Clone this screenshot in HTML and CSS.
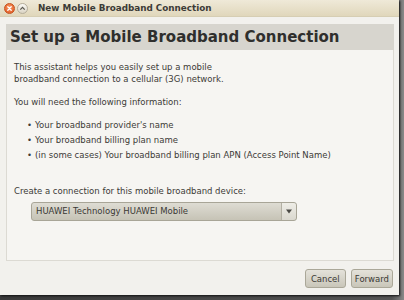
FILE: index.html
```html
<!DOCTYPE html>
<html lang="en">
<head>
    <meta charset="UTF-8">
    <title>New Mobile Broadband Connection</title>
    <link rel="stylesheet" href="styles.css">
</head>
<body>
    <div class="window">
        <div class="titlebar">
            <span class="wbtn close">
                <svg width="7" height="7" viewBox="0 0 7 7"><path d="M1.8 1.8L5.2 5.2M5.2 1.8L1.8 5.2" stroke="#fff" stroke-width="1.3" stroke-linecap="round"/></svg>
            </span>
            <span class="wbtn minimize">
                <svg width="7" height="7" viewBox="0 0 7 7"><path d="M1.3 4.6L3.5 2.4L5.7 4.6" fill="none" stroke="#5a5850" stroke-width="1.2"/></svg>
            </span>
            <span class="title">New Mobile Broadband Connection</span>
        </div>
        <div class="dialog">
            <div class="header">Set up a Mobile Broadband Connection</div>
            <div class="content">
                <p>This assistant helps you easily set up a mobile<br>broadband connection to a cellular (3G) network.</p>
                <p>You will need the following information:</p>
                <ul class="needs">
                    <li>Your broadband provider's name</li>
                    <li>Your broadband billing plan name</li>
                    <li>(in some cases) Your broadband billing plan APN (Access Point Name)</li>
                </ul>
                <p class="device-label">Create a connection for this mobile broadband device:</p>
                <div class="combo">
                    <span class="combo-text">HUAWEI Technology HUAWEI Mobile</span>
                    <span class="combo-arrow">
                        <svg width="6" height="5" viewBox="0 0 6 5"><path d="M0 0.5H6L3 4.5Z" fill="#4a4945"/></svg>
                    </span>
                </div>
            </div>
            <div class="actions">
                <button class="button">Cancel</button>
                <button class="button">Forward</button>
            </div>
        </div>
    </div>
</body>
</html>
```

FILE: styles.css
```css
body {
    margin: 0;
    width: 404px;
    height: 300px;
    overflow: hidden;
    background: linear-gradient(90deg, #3a3a3a, #555 97%, #888);
    font-family: "DejaVu Sans", sans-serif;
}
.window {
    width: 399px;
    height: 295px;
    background: #f2f1ed;
    display: flex;
    flex-direction: column;
    box-shadow: 1px 1px 2px #111;
}
.titlebar {
    height: 16px;
    display: flex;
    align-items: center;
    padding-left: 4px;
    background: linear-gradient(#efe9d8, #e0d7bb);
    border-bottom: 1px solid #d6ceb3;
}
.wbtn {
    width: 9px;
    height: 9px;
    border-radius: 50%;
    display: flex;
    align-items: center;
    justify-content: center;
    margin-right: 2px;
}
.close {
    background: radial-gradient(circle at 50% 35%, #f8975f, #df5520);
    border: 1px solid #c4521e;
}
.minimize {
    background: linear-gradient(#fbfaf6, #dad4c4);
    border: 1px solid #b5ae9c;
}
.title {
    margin-left: 8px;
    font-size: 8.8px;
    font-weight: bold;
    color: #3c3b37;
}
.dialog {
    flex: 1;
    padding: 7px 5px 7px 6px;
    display: flex;
    flex-direction: column;
}
.header {
    background: #d7d5ce;
    height: 26px;
    line-height: 27px;
    padding-left: 4px;
    font-size: 15px;
    font-weight: bold;
    color: #2f2f2d;
}
.content {
    height: 211px;
    border: 1px solid #dcdad3;
    border-top: none;
    background: #f6f5f2;
    padding: 11px 0 0 7px;
    font-size: 8.5px;
    color: #3c3b37;
    box-sizing: border-box;
}
.content p {
    margin: 0 0 11px 0;
    line-height: 12px;
}
.needs {
    margin: -1.5px 0 22.5px 0;
    padding: 0 0 0 13px;
    list-style: none;
}
.needs li {
    line-height: 15px;
}
.needs li::before {
    content: "\2022";
    margin-right: 3px;
}
.content .device-label {
    margin-bottom: 5px;
}
.combo {
    margin-left: 17px;
    width: 266px;
    height: 19px;
    display: flex;
    border: 1px solid #a8a597;
    border-radius: 3px;
    background: linear-gradient(#dedcd3, #c6c3b6);
    box-sizing: border-box;
}
.combo-text {
    flex: 1;
    padding-left: 4px;
    line-height: 17px;
    font-size: 8.5px;
    color: #3a3935;
    border-right: 1px solid #b3b0a4;
}
.combo-arrow {
    width: 14px;
    display: flex;
    align-items: center;
    justify-content: center;
    background: linear-gradient(#eeede7, #dad8cf);
    border-radius: 0 3px 3px 0;
}
.actions {
    margin-top: auto;
    display: flex;
    justify-content: flex-end;
    gap: 5px;
    padding-right: 1px;
}
.button {
    min-width: 41px;
    height: 19px;
    padding: 0 3px;
    font-family: "DejaVu Sans", sans-serif;
    font-size: 8.5px;
    color: #3a3935;
    border: 1px solid #aaa798;
    border-radius: 3px;
    background: linear-gradient(#e4e2da, #c9c6b9);
}
```
